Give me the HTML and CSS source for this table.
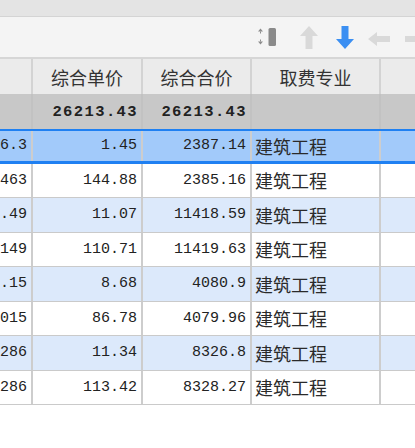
FILE: index.html
```html
<!DOCTYPE html>
<html lang="zh">
<head>
<meta charset="utf-8">
<link rel="stylesheet" href="styles.css">
</head>
<body>
<div class="topbar"></div>
<div class="toolbar">
  <svg class="ico ico-sort" width="20" height="20" viewBox="0 0 20 20">
    <path d="M1 4.5 L3.5 1.5 L6 4.5 Z" fill="#8c8c8c"/>
    <rect x="3" y="4.5" width="1" height="2" fill="#8c8c8c"/>
    <rect x="3" y="12.5" width="1" height="2" fill="#8c8c8c"/>
    <path d="M1 14.5 L3.5 17.5 L6 14.5 Z" fill="#8c8c8c"/>
    <rect x="11.5" y="1" width="7.5" height="18" rx="1.5" fill="#8a8a8a"/>
  </svg>
  <svg class="ico ico-up" width="18" height="23" viewBox="0 0 18 23">
    <path d="M9 0 L18 10 L12.5 10 L12.5 23 L5.5 23 L5.5 10 L0 10 Z" fill="#d9d9d9"/>
  </svg>
  <svg class="ico ico-down" width="18" height="23" viewBox="0 0 18 23">
    <path d="M5.5 0 L12.5 0 L12.5 13 L18 13 L9 23 L0 13 L5.5 13 Z" fill="#3b8ff2"/>
  </svg>
  <svg class="ico ico-left" width="22" height="14" viewBox="0 0 22 14">
    <path d="M0 7 L9 0 L9 4 L22 4 L22 10 L9 10 L9 14 Z" fill="#d9d9d9"/>
  </svg>
  <svg class="ico ico-right" width="22" height="14" viewBox="0 0 22 14">
    <path d="M0 4 L13 4 L13 0 L22 7 L13 14 L13 10 L0 10 Z" fill="#d9d9d9"/>
  </svg>
</div>
<div class="grid">
  <div class="row head">
    <div class="cell"></div>
    <div class="cell center">综合单价</div>
    <div class="cell center">综合合价</div>
    <div class="cell center">取费专业</div>
    <div class="cell"></div>
  </div>
  <div class="row total">
    <div class="cell"></div>
    <div class="cell num bold">26213.43</div>
    <div class="cell num bold">26213.43</div>
    <div class="cell"></div>
    <div class="cell"></div>
  </div>
  <div class="row sel">
    <div class="cell num"><span>1646.3</span></div>
    <div class="cell num">1.45</div>
    <div class="cell num">2387.14</div>
    <div class="cell txt">建筑工程</div>
    <div class="cell"></div>
  </div>
  <div class="row">
    <div class="cell num"><span>16.463</span></div>
    <div class="cell num">144.88</div>
    <div class="cell num">2385.16</div>
    <div class="cell txt">建筑工程</div>
    <div class="cell"></div>
  </div>
  <div class="row alt">
    <div class="cell num"><span>1031.49</span></div>
    <div class="cell num">11.07</div>
    <div class="cell num">11418.59</div>
    <div class="cell txt">建筑工程</div>
    <div class="cell"></div>
  </div>
  <div class="row">
    <div class="cell num"><span>103.149</span></div>
    <div class="cell num">110.71</div>
    <div class="cell num">11419.63</div>
    <div class="cell txt">建筑工程</div>
    <div class="cell"></div>
  </div>
  <div class="row alt">
    <div class="cell num"><span>470.15</span></div>
    <div class="cell num">8.68</div>
    <div class="cell num">4080.9</div>
    <div class="cell txt">建筑工程</div>
    <div class="cell"></div>
  </div>
  <div class="row">
    <div class="cell num"><span>47.015</span></div>
    <div class="cell num">86.78</div>
    <div class="cell num">4079.96</div>
    <div class="cell txt">建筑工程</div>
    <div class="cell"></div>
  </div>
  <div class="row alt">
    <div class="cell num"><span>734.286</span></div>
    <div class="cell num">11.34</div>
    <div class="cell num">8326.8</div>
    <div class="cell txt">建筑工程</div>
    <div class="cell"></div>
  </div>
  <div class="row">
    <div class="cell num"><span>73.4286</span></div>
    <div class="cell num">113.42</div>
    <div class="cell num">8328.27</div>
    <div class="cell txt">建筑工程</div>
    <div class="cell"></div>
  </div>
</div>
</body>
</html>
```
FILE: styles.css
```css
html, body {
  margin: 0;
  padding: 0;
  background: #ffffff;
  overflow: hidden;
  width: 415px;
  height: 448px;
}
body {
  font-family: "Noto Sans CJK SC", "Noto Sans", sans-serif;
  color: #333;
}
.topbar {
  height: 16px;
  background: #e4e4e4;
  border-bottom: 1px solid #d4d4d4;
}
.toolbar {
  height: 40px;
  background: #f4f4f4;
  border-bottom: 2px solid #d6d6d6;
  display: flex;
  align-items: center;
  padding-left: 257px;
  width: 200px;
}
.ico { flex: none; display: block; }
.ico-up { margin-left: 23px; margin-top: 1px; }
.ico-down { margin-left: 18px; margin-top: 1px; }
.ico-left { margin-left: 14px; margin-top: 3px; }
.ico-right { margin-left: 15px; margin-top: 3px; }

.grid {
  width: 450px;
}
.row {
  display: grid;
  grid-template-columns: 33px 110px 109px 129px 69px;
  height: 34.5px;
  box-sizing: border-box;
  border-bottom: 1px solid #cacaca;
  background: #ffffff;
}
.row.alt { background: #dce9fb; }
.row.head {
  height: 35px;
  background: #ebebeb;
  border-bottom: none;
}
.row.total {
  height: 35px;
  background: #c8c8c8;
  border-bottom: none;
}
.row.sel {
  background: #a2cafa;
  border-top: 2px solid #1f80f2;
  border-bottom: 3px solid #1f80f2;
}
.cell {
  box-sizing: border-box;
  border-right: 2px solid #cdcdcd;
  display: flex;
  align-items: center;
  overflow: hidden;
  white-space: nowrap;
  min-width: 0;
}
.head .cell { border-right-color: #d3d3d3; }
.total .cell { border-right-color: #c2c2c2; }
.center {
  justify-content: center;
  font-size: 18px;
  color: #333;
}
.num {
  justify-content: flex-end;
  padding-right: 4px;
  font-family: "Liberation Mono", "DejaVu Sans Mono", monospace;
  font-size: 15px;
  color: #222;
}
.num span { flex: none; }
.bold {
  font-weight: bold;
  font-size: 15.5px;
  letter-spacing: 1.4px;
  padding-right: 3px;
  color: #222;
}
.txt {
  padding-left: 3px;
  font-size: 18px;
  color: #2a2a2a;
}
```
